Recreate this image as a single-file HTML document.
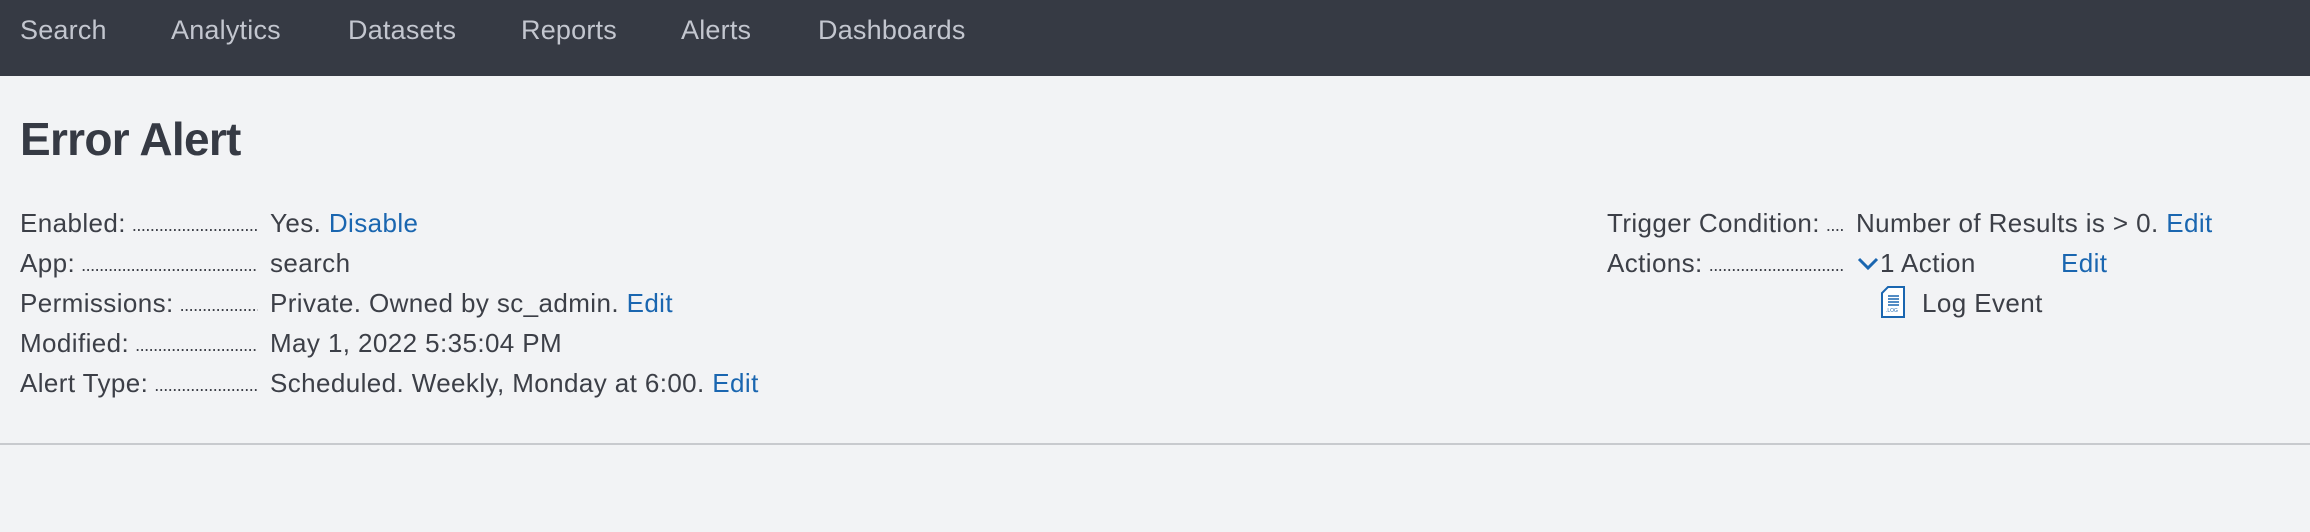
<!DOCTYPE html>
<html><head><meta charset="utf-8"><style>
*{margin:0;padding:0;box-sizing:border-box}
body{width:2310px;height:532px;background:#f2f3f5;font-family:"Liberation Sans",sans-serif;color:#3c3f47;position:relative;overflow:hidden}
.nav{position:absolute;left:0;top:0;width:2310px;height:76px;background:#363a44}
.nav span{position:absolute;top:15px;font-size:27px;color:#c3c6cf;letter-spacing:0.2px}
h1{position:absolute;left:20px;top:112px;font-size:46px;font-weight:bold;color:#363a44;letter-spacing:-0.7px}
.row{position:absolute;height:40px;display:flex;align-items:center;font-size:26px;letter-spacing:0.4px;white-space:nowrap}
.lab{display:flex;width:238px;margin-right:12px;overflow:hidden}
.lab .d{flex:1;overflow:hidden;letter-spacing:-0.5px;font-size:18px;margin-left:6px;padding-top:7px}
a{color:#1a66b0;text-decoration:none}
.hr{position:absolute;left:0;top:443px;width:2310px;height:2px;background:#c8cace}
</style></head><body>
<div class="nav">
<span style="left:20px">Search</span>
<span style="left:171px">Analytics</span>
<span style="left:348px">Datasets</span>
<span style="left:521px">Reports</span>
<span style="left:681px">Alerts</span>
<span style="left:818px">Dashboards</span>
</div>
<h1>Error Alert</h1>
<div class="row" style="left:20px;top:203px"><div class="lab"><span>Enabled:</span><span class="d">..........................................................</span></div>Yes.&nbsp;<a>Disable</a></div>
<div class="row" style="left:20px;top:243px"><div class="lab"><span>App:</span><span class="d">..........................................................</span></div>search</div>
<div class="row" style="left:20px;top:283px"><div class="lab"><span>Permissions:</span><span class="d">..........................................................</span></div>Private. Owned by sc_admin.&nbsp;<a>Edit</a></div>
<div class="row" style="left:20px;top:323px"><div class="lab"><span>Modified:</span><span class="d">..........................................................</span></div>May 1, 2022 5:35:04 PM</div>
<div class="row" style="left:20px;top:363px"><div class="lab"><span>Alert Type:</span><span class="d">..........................................................</span></div>Scheduled. Weekly, Monday at 6:00.&nbsp;<a>Edit</a></div>

<div class="row" style="left:1607px;top:203px"><div class="lab" style="width:237px"><span>Trigger Condition:</span><span class="d">..........................................................</span></div>Number of Results is &gt; 0.&nbsp;<a>Edit</a></div>
<div class="row" style="left:1607px;top:243px"><div class="lab" style="width:237px"><span>Actions:</span><span class="d">..........................................................</span></div>
<svg width="24" height="20" viewBox="0 0 24 20"><path d="M3 6 L12 15 L21 6" fill="none" stroke="#1a66b0" stroke-width="3"/></svg>1 Action<a style="position:absolute;left:454px">Edit</a></div>
<svg style="position:absolute;left:1880px;top:286px" width="26" height="32" viewBox="0 0 26 32"><path d="M8 1 H24 V31 H2 V7 Z" fill="#fff" stroke="#1a66b0" stroke-width="2"/><path d="M8 10 H19 M8 13 H19 M8 16 H19 M8 19 H19" stroke="#1a66b0" stroke-width="1.5"/><text x="6" y="26" font-size="5" fill="#1a66b0" font-family="Liberation Sans">.LOG</text></svg>
<div class="row" style="left:1922px;top:283px">Log Event</div>
<div class="hr"></div>
</body></html>
